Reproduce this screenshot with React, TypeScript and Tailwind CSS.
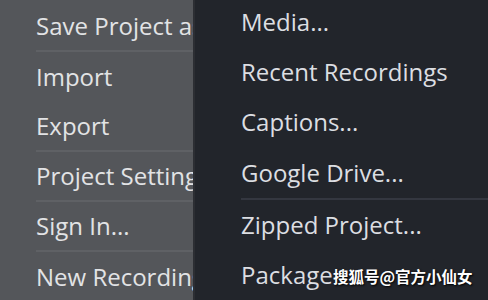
const leftItems = [
  { label: "Save Project as...", divider: true },
  { label: "Import", divider: false },
  { label: "Export", divider: true },
  { label: "Project Settings...", divider: true },
  { label: "Sign In...", divider: true },
  { label: "New Recording", divider: false },
];

const rightItems = [
  { label: "Media...", divider: false },
  { label: "Recent Recordings", divider: false },
  { label: "Captions...", divider: false },
  { label: "Google Drive...", divider: true },
  { label: "Zipped Project...", divider: false },
  { label: "Package", divider: false },
];

export default function App() {
  return (
    <div
      className="relative flex h-[300px] w-[488px] overflow-hidden bg-[#22252b]"
      style={{ fontFamily: "'Open Sans', 'Noto Sans', sans-serif" }}
    >
      {/* Parent menu */}
      <div className="w-[193px] shrink-0 overflow-hidden bg-[#54565a] pt-[2px]">
        {leftItems.map((item) => (
          <div
            key={item.label}
            className={`ml-[36px] flex h-[50px] items-center whitespace-nowrap text-[24px] text-[#e2e3e5] ${
              item.divider ? "border-b-2 border-[#5f6165]" : ""
            }`}
          >
            {item.label}
          </div>
        ))}
      </div>

      <div className="w-[2px] shrink-0 bg-[#2c2e33]" />

      {/* Submenu */}
      <div className="flex-1 -mt-[3px]">
        {rightItems.map((item) => (
          <div
            key={item.label}
            className={`ml-[46px] flex items-center whitespace-nowrap text-[24px] text-[#dcdee2] ${
              item.divider ? "h-[53px] border-b-2 border-[#343740]" : "h-[50px]"
            }`}
          >
            {item.label}
          </div>
        ))}
      </div>

      {/* Watermark */}
      <div
        className="absolute left-[333px] top-[265px] whitespace-nowrap text-[15.5px] font-bold text-white [text-shadow:1px_1px_2px_#000]"
        style={{ fontFamily: "'Noto Sans CJK SC', sans-serif" }}
      >
        搜狐号@官方小仙女
      </div>
    </div>
  );
}
